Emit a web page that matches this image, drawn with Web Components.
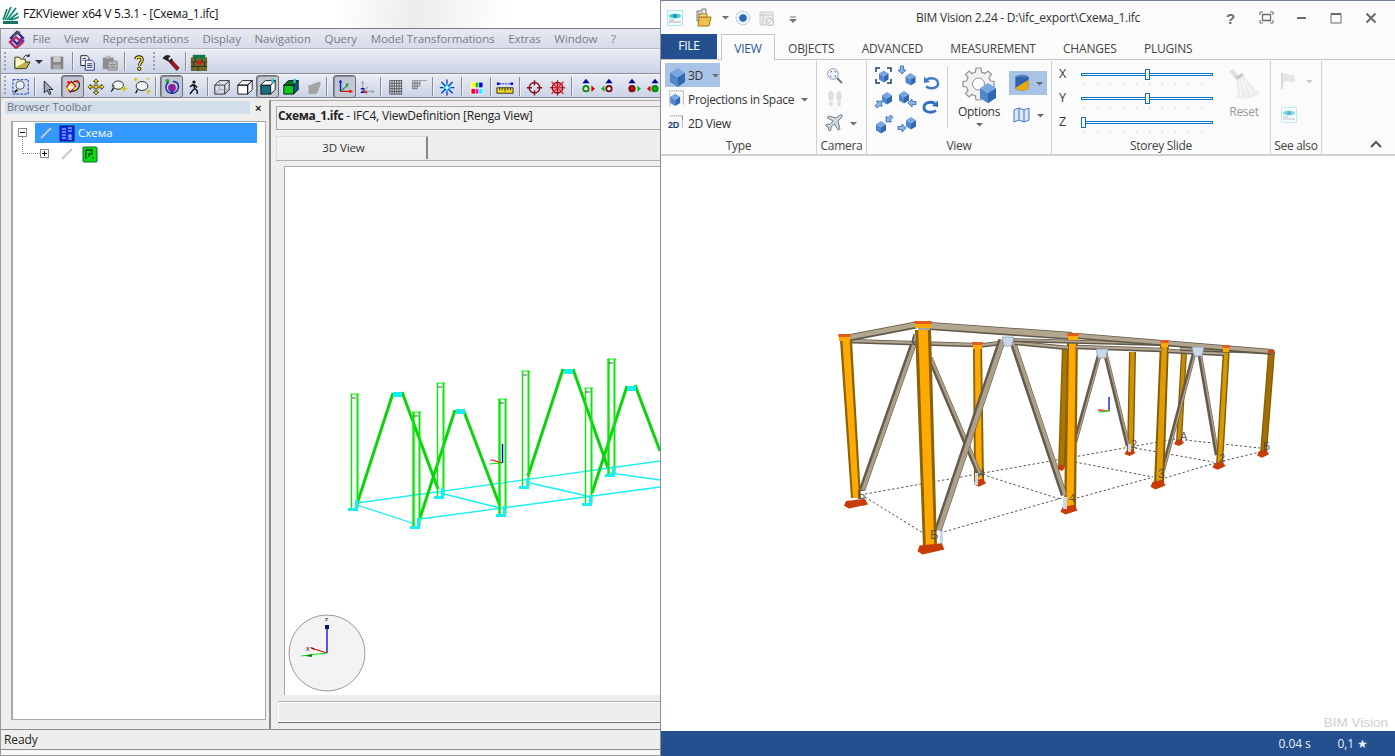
<!DOCTYPE html>
<html><head><meta charset="utf-8"><title>FZK and BIM Vision</title>
<style>html,body{margin:0;padding:0;background:#fff;width:1395px;height:756px;overflow:hidden}</style>
</head><body>
<desk-top></desk-top>
<script>
const cube=(x,y,s,t='#79a6de',l='#4f86cc',r='#2e68b3',k='none')=>{const h=s*.32;return `<path d="M${x} ${y+h}L${x+s*.5} ${y}L${x+s} ${y+h}L${x+s*.5} ${y+2*h}Z" fill="${t}" stroke="${k}" stroke-width=".8"/><path d="M${x} ${y+h}L${x+s*.5} ${y+2*h}V${y+2*h+s*.62}L${x} ${y+h+s*.62}Z" fill="${l}" stroke="${k}" stroke-width=".8"/><path d="M${x+s} ${y+h}L${x+s*.5} ${y+2*h}V${y+2*h+s*.62}L${x+s} ${y+h+s*.62}Z" fill="${r}" stroke="${k}" stroke-width=".8"/>`};
const arw=(x,y,rot)=>`<g transform="translate(${x} ${y}) rotate(${rot})"><path d="M-4 -1.6H0V-4L4 0L0 4V1.6H-4Z" fill="#8eb4e3" stroke="#3a71b8" stroke-width=".9"/></g>`;
const node=(circ,fill,side,col)=>`<path d="M10 1L14 6H6Z" fill="#00009c"/><circle cx="10" cy="12" r="3" fill="${fill}" stroke="${circ}" stroke-width="2"/>`+(side=='r'?`<path d="M16 8.5L20 12L16 15.5Z" fill="${col}"/>`:`<path d="M5 8.5L1 12L5 15.5Z" fill="${col}"/>`);
const grid=(c)=>{let s='';for(let i=0;i<6;i++){s+=`<path d="M${3+i*2.6} 3V18M3 ${3+i*3}H17" stroke="${c}" stroke-width=".9" fill="none"/>`}return s};
const ICONS={
 fzklogo:`<path d="M1 18H16V21H1Z" fill="#1a6f66"/><path d="M1 17L5 6M3 17L9 4M5 17L14 5M7 17L16 10M9 17L17 14" stroke="#0b8a74" stroke-width="1.7" fill="none"/>`,
 chain:`<path d="M9 2L15 8L9 14L3 8Z" fill="none" stroke="#2b2f8f" stroke-width="2.4"/><path d="M8 7L14 13L8 18L2 12Z" fill="none" stroke="#b02a6b" stroke-width="2.4"/><path d="M6 5L12 2" stroke="#555" stroke-width="2"/><path d="M12 8L16 12" stroke="#7b2fa0" stroke-width="2.4"/>`,
 folder:`<path d="M2 9V17H14L18 10H6Z" fill="#b9b050" stroke="#3c3a10"/><path d="M2 16V5H7L8 7H13V10" fill="#fff7c9" stroke="#3c3a10"/><path d="M11 6C12 3 15 2 17 4M17 4V1.5M17 4L14.6 4" stroke="#111" fill="none"/>`,
 down:`<path d="M6 8H14L10 12Z" fill="#333"/>`,
 save:`<path d="M3 3H17V17H3Z" fill="#878787"/><path d="M6 3H14V9H6Z" fill="#ccc"/><path d="M6 12H14V17H6Z" fill="#aaa"/>`,
 copy:`<path d="M2 2H9L11 4V13H2Z" fill="#fff" stroke="#111"/><path d="M7 7H14L17 10V18H7Z" fill="#fff" stroke="#0b1e78"/><path d="M4 5H8M4 7H6M9 11H15M9 13H15M9 15H15" stroke="#0b1e78"/>`,
 paste:`<path d="M2 4H14V17H2Z" fill="#8d8d8d"/><path d="M5 2H11V5H5Z" fill="#bbb"/><path d="M8 8H18V18H8Z" fill="#b8b8b8" stroke="#888"/><path d="M10 12H16M10 15H16" stroke="#777"/>`,
 help:`<path d="M6.5 6C7 2.500 13 2.500 13.500 6.200C13.800 9 10.800 9.500 10.400 13" fill="none" stroke="#111" stroke-width="3.600"/><path d="M6.500 6C7 2.500 13 2.500 13.500 6.200C13.800 9 10.800 9.500 10.400 13" fill="none" stroke="#f7e02d" stroke-width="1.800"/><circle cx="10.300" cy="16.500" r="1.900" fill="#f7e02d" stroke="#111"/>`,
 wrench:`<path d="M1 5C3 1.500 6 1 9 2.500L6.500 5.500L8 7.500L11 5.500C12 8 11.500 9.500 10.500 10.500" fill="#222" stroke="#111" stroke-width=".8"/><path d="M8 9L11 7L19 15.500L16.500 18.500Z" fill="#a31616" stroke="#3a0a0a" stroke-width=".8"/>`,
 brick:`<path d="M1 4H19V19H1Z" fill="#6b6a2a"/><path d="M1 9H19M1 14H19M6 4V9M13 4V9M4 9V14M16 9V14M9 14V19" stroke="#222" stroke-width=".8"/><path d="M8 8H13V12H8Z" fill="#e6131b"/><path d="M3 1H17V5H3Z" fill="#12784a"/>`,
 zoomwin:`<path d="M1 2H18V18H1Z" fill="none" stroke="#0a2cc0" stroke-dasharray="3 1.3"/><circle cx="9" cy="8" r="4.5" fill="#e9f2f7" stroke="#444"/><path d="M6 13L3 16" stroke="#111" stroke-width="2"/>`,
 pointer:`<path d="M5 2V16L8.5 13L11 18L13 17L10.5 12H15Z" fill="#aab" stroke="#111"/>`,
 select:`<path d="M3 10L8 4L13 9L7 16Z" fill="#fff" stroke="#c01" stroke-width="1.4"/><path d="M10 5C14 2 18 4 17 9C16 13 12 15 7 15" fill="none" stroke="#222" stroke-width="1.2"/><circle cx="5" cy="5" r="1.6" fill="#e21"/><circle cx="15" cy="4" r="1.6" fill="#e21"/><circle cx="4" cy="12" r="1.6" fill="#fc0"/><circle cx="12" cy="12" r="1.6" fill="#fc0"/><circle cx="9" cy="8" r="1.6" fill="#fc0"/>`,
 move:`<path d="M10 1L13 4H11V9H16V7L19 10L16 13V11H11V16H13L10 19L7 16H9V11H4V13L1 10L4 7V9H9V4H7Z" fill="#f8e21c" stroke="#222" stroke-width=".8"/>`,
 pan:`<ellipse cx="9" cy="8" rx="6" ry="4.6" fill="#eef3f6" stroke="#222"/><path d="M4 11C3 14 1 15 1 15" stroke="#111" stroke-width="1.5" fill="none"/><path d="M12 12H19M15.5 9V15" stroke="#d8c11a" stroke-width="2"/><path d="M2 9H5" stroke="#222"/>`,
 zoomrect:`<ellipse cx="10" cy="9" rx="6.5" ry="5" fill="#eef3f6" stroke="#222"/><path d="M5 13L3 17" stroke="#111" stroke-width="1.5"/><path d="M1 1H5M3 0V4M15 15H20M17 13V18M15 1H19" stroke="#d8c11a" stroke-width="1.5"/>`,
 orbit:`<circle cx="10" cy="11" r="4.3" fill="#8c1f9e"/><circle cx="5" cy="3.5" r="2.3" fill="#29a34a"/><path d="M6 5C1 9 3 17 10 17C15 17 18 13 17 8C16 5 13 4 11 4" fill="none" stroke="#0a2ca8" stroke-width="1.6"/><path d="M8 15L11 18V14Z" fill="#0a2ca8"/>`,
 walk:`<circle cx="10" cy="3" r="2" fill="#111"/><path d="M9 6L11 11L8 14L5 18M11 11L14 14V18M9 6L5 9M10 6L14 10" stroke="#111" stroke-width="1.8" fill="none"/>`,
 wirecube:`<path d="M2 8H13V18H2ZM2 8L7 3H18L13 8M18 3V13L13 18" fill="none" stroke="#222"/><path d="M7 3V13H18M7 13L2 18" stroke="#888" fill="none" stroke-width=".7"/>`,
 whitecube:`<path d="M2 8H13V18H2ZM2 8L7 3H18L13 8ZM18 3V13L13 18V8Z" fill="#fff" stroke="#111"/>`,
 tealcube:`<path d="M2 8H13V18H2Z" fill="#196f82" stroke="#111"/><path d="M2 8L7 3H18L13 8Z" fill="#fff" stroke="#111"/><path d="M18 3V13L13 18V8Z" fill="#fff" stroke="#111"/><path d="M15 1V6" stroke="#2cc" stroke-width="2.6"/>`,
 greencube:`<path d="M2 8H13V18H2Z" fill="#0ac81c" stroke="#111"/><path d="M2 8L7 3H18L13 8Z" fill="#07761a" stroke="#111"/><path d="M18 3V13L13 18V8Z" fill="#065a88" stroke="#111"/><path d="M14 1V6" stroke="#2cc" stroke-width="2.6"/>`,
 blob:`<path d="M3 9L11 6C15 3 19 4 17 8C15 13 15 16 12 18H4V11Z" fill="#a3a3a3"/>`,
 axis:`<path d="M5 15V3" stroke="#0a20c8" stroke-width="1.6"/><path d="M3 5L5 2L7 5Z" fill="#0a20c8"/><path d="M5 15H17" stroke="#e00" stroke-width="1.4"/><path d="M15 13L19 15L15 17Z" fill="#e00"/><path d="M5 15L13 8" stroke="#0a9c3c" stroke-width="1.4"/><path d="M10 7L14 6L13 10Z" fill="#0a9c3c"/>`,
 axisf:`<path d="M4 15V5M4 15L14 15M4 15L10 10" stroke="#9aa" stroke-width="1.4"/><path d="M2 6L4 3L6 6Z" fill="#9aa"/><path d="M14 13L18 15L14 17Z" fill="#9aa"/><path d="M2 12H6M2 16H6" stroke="#00a" stroke-width="1.6"/><path d="M5 14L9 17" stroke="#d00" stroke-width="1.6"/>`,
 grid:grid('#444'),
 gridf:`<path d="M3 3H19" stroke="#999"/>`+`<path d="M3 3V12M5.5 3V12M8 3V12M11 3V9M3 6H11M3 9H11M3 12H8" stroke="#666" stroke-width=".9"/>`,
 snow:`<path d="M10 0V20M1 10H19M3 3L17 17M17 3L3 17" stroke="#0a2cd0" stroke-width="1.6"/><path d="M5 10H15M10 5V15" stroke="#19d4ee" stroke-width="3"/><circle cx="10" cy="10" r="2" fill="#fff"/>`,
 colors:`<path d="M1 1H19V19H1Z" fill="#fff"/><path d="M2 2H7V9H2Z" fill="#ff0"/><path d="M8 2H12V9H8Z" fill="#0c0"/><path d="M13 2H18V9H13Z" fill="#00e"/><path d="M2 11H7V18H2Z" fill="#f01"/><path d="M8 11H12V18H8Z" fill="#f0d"/><path d="M13 11H18V18H13Z" fill="#0ff"/>`,
 ruler:`<path d="M1 5H4V8H1ZM16 5H19V8H16Z" fill="#0000d0"/><path d="M4 6.5H16" stroke="#0000d0" stroke-dasharray="2 1.2"/><path d="M1 11H19V17H1Z" fill="#f8e21c" stroke="#222"/><path d="M4 11V14M7 11V14M10 11V15M13 11V14M16 11V14" stroke="#222"/>`,
 target:`<circle cx="10" cy="10" r="6.2" fill="none" stroke="#8a0e16" stroke-width="1.6"/><path d="M10 1V7M10 13V19M1 10H7M13 10H19" stroke="#8a0e16" stroke-width="1.6"/>`,
 targetx:`<circle cx="10" cy="10" r="6.2" fill="none" stroke="#8a0e16" stroke-width="1.6"/><path d="M10 1V19M1 10H19" stroke="#8a0e16" stroke-width="1.4"/><path d="M3 3L17 17M17 3L3 17" stroke="#f01e2a" stroke-width="1.5"/><path d="M6 6H14V14H6Z" fill="none" stroke="#f01e2a" stroke-dasharray="1.5 1"/>`,
 n1:node('#0a8c0a','#fff','r','#d00000'),n2:node('#7a0c12','#fff','l','#0bb80b'),n3:node('#7a0c12','#d40c12','r','#0bb80b'),n4:node('#0a8c0a','#0bb80b','l','#e00000'),
 slash:`<path d="M3 13L13 3" stroke="#c6c6c6" stroke-width="2"/>`,
 blueleaf:`<path d="M1 1H15V16H1Z" fill="#0a2cf0" stroke="#001a70"/><path d="M3 4H7M3 7H7M3 10H7M3 13H7" stroke="#cde" stroke-width="1.2"/><path d="M9 3H13M9 6H13M11 9V13M9 11H13M9 14H13" stroke="#cde" stroke-width="1.1"/>`,
 greenleaf:`<path d="M1 1.5Q1 1 2 1H14Q15 1 15 2V15Q15 16 14 16H2Q1 16 1 15Z" fill="#0cdc10" stroke="#063"/><path d="M4 13V4H10V8H7V11" fill="none" stroke="#041" stroke-width="1.3"/><path d="M11 11V13" stroke="#041" stroke-width="1.3"/>`,
 bimlogo:`<path d="M1.5 2Q1.500 1.500 2 1.500H16Q16.500 1.500 16.500 2V16Q16.500 16.500 16 16.500H2Q1.500 16.500 1.500 16Z" fill="#f6fdfd" stroke="#a9e6ea"/><ellipse cx="9" cy="7" rx="6" ry="2.500" fill="#3fcfd9"/><ellipse cx="9" cy="7" rx="2" ry="1.800" fill="#2c86a8"/><path d="M3 11H8M3 13H15" stroke="#aab" stroke-width="1.100"/>`,
 bimfolder:`<path d="M2 3H6L7 1H11V13H2Z" fill="#eee" stroke="#777"/><path d="M4 3V13M7 3V13" stroke="#999"/><path d="M4 9H16L14 18H3Z" fill="#eec04e" stroke="#a37a1b"/><path d="M4 6H12V9H4Z" fill="#f7d782" stroke="#a37a1b"/>`,
 tri:`<path d="M1 3H8L4.5 6.5Z" fill="#6b6b6b"/>`,
 trig:`<path d="M1 3H8L4.5 6.5Z" fill="#ccc"/>`,
 record:`<circle cx="8" cy="8" r="6.8" fill="#f2f6fc" stroke="#9dbbe0" stroke-dasharray="2.4 1"/><circle cx="8" cy="8" r="3.8" fill="#2b6cb8"/>`,
 gray:`<path d="M1 2H14V15H1Z" fill="#ececec" stroke="#cfcfcf"/><path d="M1 5H14M4 2V15" stroke="#c8c8c8"/><circle cx="11" cy="12" r="3.6" fill="#f5f5f5" stroke="#bbb"/><path d="M8.8 14L13 10" stroke="#bbb"/>`,
 qatmore:`<path d="M2 4H8" stroke="#777"/><path d="M1 6H9L5 10Z" fill="#777"/>`,
 help2:`<text x="2" y="14" font-family="Liberation Sans" font-weight="700" font-size="15" fill="#6b6b6b">?</text>`,
 restore:`<path d="M1 4V1H4M11 1H14V4M1 9V12H4M11 12H14V9" fill="none" stroke="#6b6b6b"/><path d="M3.500 3.500H11.500V9.500H3.500Z" fill="none" stroke="#6b6b6b" stroke-width="1.300"/>`,
 min:`<path d="M1 6H10" stroke="#6b6b6b" stroke-width="2"/>`,
 max:`<path d="M1 1.5H11V11H1Z" fill="none" stroke="#6b6b6b"/><path d="M1 2H11" stroke="#6b6b6b" stroke-width="2"/>`,
 close:`<path d="M1.5 1.5L10.5 10.5M10.5 1.5L1.5 10.5" stroke="#6b6b6b" stroke-width="2"/>`,
 cube3d:cube(1,1,15),
 proj:`<path d="M1 1H17V17" fill="none" stroke="#666" stroke-dasharray="1 1"/><path d="M2 3V18" stroke="#666" stroke-dasharray="1 1"/>`+cube(2.5,4,11),
 view2d:`<path d="M3 2H16V7M16 2V16" fill="none" stroke="#666" stroke-dasharray="1 1"/><text x="0" y="16" font-family="Liberation Sans" font-weight="700" font-size="10" fill="#143f78">2D</text>`,
 mag:`<circle cx="7" cy="7" r="5.3" fill="#f1f6fb" stroke="#99a"/><path d="M5 5.5V4.5H6M8.500 4.500H9.500V5.500M9.500 8.500V9.500H8.500M5.500 9.500H4.500V8.500" stroke="#3f78c4" fill="none"/><path d="M11 11L16 16" stroke="#777" stroke-width="2"/>`,
 feet:`<ellipse cx="5" cy="6" rx="2.7" ry="5" fill="#dedede"/><ellipse cx="5" cy="14" rx="2" ry="2.4" fill="#dedede"/><ellipse cx="13" cy="6" rx="2.7" ry="5" fill="#dedede"/><ellipse cx="13" cy="14" rx="2" ry="2.4" fill="#dedede"/>`,
 plane:`<path d="M15 1C16 0 18 1 17 3L13 7L15 15L13 16L9.500 10L6 13V16L4 17L3 13L0.500 11.500L2 10L5 10.500L8 7L2 3.500L4 2L11 4Z" fill="#cfd8de" stroke="#65747d" stroke-width=".9"/>`,
 vfront:`<path d="M1 5V1H5M12 1H16V5M1 12V16H5M12 16H16V12" fill="none" stroke="#1d3f6e" stroke-width="1.5"/>`+cube(4,3.500,9.5),
 vtop:arw(4,4,90)+cube(7.500,7,10),
 vleft:arw(4,14,-45)+cube(7,2,10),
 vright:cube(1,1,10)+arw(14,13,180),
 vfl:cube(1,7,10)+arw(14,5,135),
 vbr:arw(4,14,0)+cube(8,3,10),
 rotl:`<path d="M5 5.500C9 3 16 4.500 16 9.500C16 14.500 8 15.500 4 12.500" fill="none" stroke="#3f7cc8" stroke-width="2.4"/><path d="M2 2.500V9L8 8Z" fill="#3f7cc8"/>`,
 rotr:`<path d="M13 5.500C9 3 2 4.500 2 9.500C2 14.500 10 15.500 14 12.500" fill="none" stroke="#2f6fc0" stroke-width="2.800"/><path d="M16 2.500V9L10 8Z" fill="#2f6fc0"/>`,
 gear:`<path d="M15 1H20L20.500 5L24 6.500L27 4L30.500 7.500L28 10.500L29.500 14L33 14.500V19.500L29.500 20L28 23.500L30.500 26.500L27 30L24 27.500L20.500 29L20 33H15L14.500 29L11 27.500L8 30L4.500 26.500L7 23.500L5.500 20L2 19.500V14.500L5.500 14L7 10.500L4.500 7.500L8 4L11 6.500L14.500 5Z" fill="#f1f1f1" stroke="#8d9199" stroke-width="1.2"/><circle cx="17.500" cy="17" r="6" fill="#fff" stroke="#8d9199"/>`+cube(19,16,16),
 cyl:`<ellipse cx="12" cy="5" rx="8" ry="3" fill="#4d7fc2"/><path d="M4 5V18C4 22 20 22 20 18V5Z" fill="#2f62a8"/><path d="M4 18C4 22 20 22 20 18V8Z" fill="#e9a90e"/>`,
 map:`<path d="M1 3L6 1L11 3L16 1V13L11 15L6 13L1 15Z" fill="#dbe8f8" stroke="#3f78c4"/><path d="M6 1V13M11 3V15" stroke="#3f78c4"/>`,
 broom:`<path d="M3 2L11 12" stroke="#dedede" stroke-width="4"/><path d="M8 10L14 6" stroke="#c4c4c4" stroke-width="3"/><path d="M8.500 11L14.500 7C18 14 25 18 29 24C22 30 13 29 8 27C10 22 8 16 8.500 11Z" fill="#ececec"/><path d="M10.500 13L12.500 27M13 11L18 27M15 11L23 25" stroke="#fafafa" stroke-width="1.200"/>`,
 flag:`<path d="M3 2V18" stroke="#d8d8d8" stroke-width="2"/><path d="M4 3C8 1 11 6 15 3C15 7 16 9 16 10C12 13 9 8 4 11Z" fill="#e5e5e5"/>`,
 chev:`<path d="M1 7L6 2L11 7" fill="none" stroke="#555" stroke-width="2"/>`
};
class XIcon extends HTMLElement{connectedCallback(){const n=this.getAttribute('name'),w=+this.getAttribute('w')||20,h=+this.getAttribute('h')||w,vw=+this.getAttribute('vw')||w,vh=+this.getAttribute('vh')||h;const r=this.shadowRoot||this.attachShadow({mode:'open'});r.innerHTML=`<style>:host{display:inline-flex;width:${w}px;height:${h}px;flex:none}svg{display:block;overflow:visible}</style><svg width="${w}" height="${h}" viewBox="0 0 ${vw} ${vh}" xmlns="http://www.w3.org/2000/svg">${ICONS[n]||''}</svg>`}}
customElements.define('x-icon',XIcon);

class TbBtn extends HTMLElement{connectedCallback(){const p=this.hasAttribute('pressed'),w=this.getAttribute('w')||23;const r=this.attachShadow({mode:'open'});r.innerHTML=`<style>:host{display:flex;flex:none;width:${w}px;height:23px;align-items:center;justify-content:center;box-sizing:border-box;${p?'background:#c3c7d2;border:1px solid #6e7078;border-radius:3px;box-shadow:inset 1px 1px 0 #888c96;':''}}</style><x-icon name="${this.getAttribute('icon')}" w="${this.getAttribute('s')||18}" vw="20"></x-icon>`}}
customElements.define('tb-btn',TbBtn);
class TbSep extends HTMLElement{connectedCallback(){const r=this.attachShadow({mode:'open'});r.innerHTML=`<style>:host{display:block;flex:none;width:1px;height:19px;background:#8a8d96;box-shadow:1px 0 0 #eef0f6;margin:0 ${this.getAttribute('m')||3}px}</style>`}}
customElements.define('tb-sep',TbSep);
class TbGrip extends HTMLElement{connectedCallback(){const r=this.attachShadow({mode:'open'});r.innerHTML=`<style>:host{display:block;flex:none;width:2px;height:20px;margin:0 2px 0 3px;background:repeating-linear-gradient(#9aa0ad 0 2px,transparent 2px 4px)}</style>`}}
customElements.define('tb-grip',TbGrip);
class FzkBar extends HTMLElement{constructor(){super();const r=this.attachShadow({mode:'open'});r.innerHTML=`<style>:host{display:flex;align-items:center;box-sizing:border-box;height:24px;background:linear-gradient(#e9ecf4,#cbd3e7);border-bottom:1px solid #8b8f99;border-top:1px solid #f4f5f8;font-size:0}</style><slot></slot>`}}
customElements.define('fzk-bar',FzkBar);

class FzkWindow extends HTMLElement{constructor(){super();const r=this.attachShadow({mode:'open'});r.innerHTML=`<style>
:host{display:flex;flex-direction:column;width:670px;height:756px;font-family:"Open Sans","Noto Sans",sans-serif;font-size:11.500px;background:#fff;overflow:hidden}
.title{height:28px;display:flex;align-items:center;gap:4px;padding-left:2px;flex:none;background:linear-gradient(100deg,#fff 50%,#ececec 62%,#f5f5f5 68%,#fff 76%);color:#111}
.title span{font-size:12px;letter-spacing:-.23px;padding-bottom:1px}
.frame{flex:1;display:flex;flex-direction:column;border-top:1px solid #7e7e7e;border-left:1px solid #9a9a9a;min-height:0;background:#efefef}
.menu{height:20px;box-sizing:border-box;flex:none;display:flex;align-items:center;background:linear-gradient(#e8eaf2,#d6dbe9);color:#7a7c84;font-size:11.500px;gap:13.600px;border-bottom:1px solid #b6b9c1;letter-spacing:-.08px}
.menu x-icon{margin:0 -7px 0 7px}
.main{flex:1;display:flex;min-height:0;padding:0;background:#eeeeee}
.left{width:268px;flex:none;display:flex;flex-direction:column;box-sizing:border-box;padding:3px 5px 9px 4px}
.lh{display:flex;align-items:center;height:13px;flex:none;gap:0;color:#6f7378;font-size:11px;margin-bottom:7px}
.lh span{flex:1;background:#d2dfeb;height:13px;line-height:12px;padding-left:2px;margin-right:5px}
.lh b{font:700 11px "Liberation Sans";color:#222;width:9px}
.tree{flex:1;background:#fff;border:1px solid #a9a9a9;border-left-width:2px;margin-left:6px;margin-right:-2px;padding:0;position:relative}
.row{display:flex;align-items:center;height:21px}
.sel{background:#3399ff;color:#fff;height:20px;width:222px;margin-left:22px;display:flex;align-items:center;gap:5px;font-size:11.500px;padding-left:3px;box-sizing:border-box}
.box{width:9px;height:9px;box-sizing:border-box;border:1px solid #888;background:#fff;position:relative;flex:none}
.box:before{content:"";position:absolute;left:1px;right:1px;top:3px;height:1px;background:#111}
.box.p:after{content:"";position:absolute;top:1px;bottom:1px;left:3px;width:1px;background:#111}
.conn{position:absolute;left:9px;top:14px;width:18px;height:18px;border-left:1px dotted #888;border-bottom:1px dotted #888;box-sizing:border-box}
.right{flex:1;min-width:0;box-sizing:border-box;border-left:2px solid #8c8c8c;border-top:1px solid #aaa;margin-top:2px;padding:5px 0 6px 5px;display:flex;flex-direction:column}
.hd{height:24px;flex:none;box-sizing:border-box;border:1px solid #a9a9a9;border-right:0;background:#f1f1f1;font-size:12px;color:#222;line-height:18px;padding-left:1px;letter-spacing:-.2px;white-space:nowrap;overflow:hidden}
.hd b{font-weight:700;letter-spacing:-.3px}
.tabs{height:24px;margin-top:6px;flex:none;border-bottom:1px solid #b0b0b0;background:#eee}
.tab{width:152px;height:23px;box-sizing:border-box;background:#f1f1f1;border:1px solid #ddd;border-right:2px solid #888;border-bottom:0;text-align:center;padding-right:16px;font-size:11.500px;line-height:21px;color:#333;letter-spacing:-.1px}
.vw{flex:1;min-height:0;margin:5px 0 0 8px;box-sizing:border-box;border-left:1.500px solid #aaa;border-top:1.500px solid #aaa;background:#fff;position:relative}
.bot{height:22px;flex:none;margin:6px 0 0 2px;border-top:1px solid #aaa;border-bottom:1.500px solid #6e6e6e;background:#eeecec;box-sizing:border-box;box-shadow:inset 1px 1px 0 #fff,inset 0 -1px 0 #fff}
.st{height:26px;flex:none;background:#fff;border-top:1px solid #8e8e8e}
.st div{height:19px;background:#eee;border-bottom:1px solid #8e8e8e;font-size:12px;line-height:19px;padding-left:3px;color:#222;letter-spacing:-.1px}
.st:after{content:"";display:block;height:5px;border-bottom:1px solid #9a9a9a;background:#f7f7f7}
</style>
<div class="title"><x-icon name="fzklogo" w="17" h="22" vw="17" vh="22"></x-icon><span>FZKViewer x64 V 5.3.1 - [Схема_1.ifc]</span></div>
<div class="frame">
<div class="menu"><x-icon name="chain" w="18"></x-icon><span>File</span><span>View</span><span>Representations</span><span>Display</span><span>Navigation</span><span>Query</span><span>Model Transformations</span><span>Extras</span><span>Window</span><span>?</span></div>
<fzk-bar style="height:25px"><tb-grip></tb-grip><span style="display:inline-block;width:3px"></span><tb-btn icon="folder" w="22" s="19"></tb-btn><tb-btn icon="down" w="12" s="20"></tb-btn><tb-btn icon="save"></tb-btn><tb-sep m="4"></tb-sep><tb-btn icon="copy" w="22"></tb-btn><tb-btn icon="paste" w="22"></tb-btn><tb-sep m="3"></tb-sep><tb-btn icon="help" w="22"></tb-btn><tb-grip></tb-grip><span style="display:inline-block;width:2px"></span><tb-btn icon="wrench"></tb-btn><tb-sep m="3"></tb-sep><tb-btn icon="brick" w="20"></tb-btn></fzk-bar>
<fzk-bar><tb-grip></tb-grip><span style="display:inline-block;width:1px"></span><tb-btn icon="zoomwin"></tb-btn><tb-sep m="2"></tb-sep><tb-btn icon="pointer" w="22" s="17"></tb-btn><tb-btn icon="select" pressed style="margin-left:2px"></tb-btn><tb-btn icon="move"></tb-btn><tb-btn icon="pan"></tb-btn><tb-btn icon="zoomrect"></tb-btn><tb-sep m="2"></tb-sep><tb-btn icon="orbit" pressed style="margin-left:2px"></tb-btn><tb-btn icon="walk" w="22" s="16"></tb-btn><tb-sep m="2"></tb-sep><tb-btn icon="wirecube"></tb-btn><tb-btn icon="whitecube"></tb-btn><tb-btn icon="tealcube" pressed></tb-btn><tb-btn icon="greencube"></tb-btn><tb-btn icon="blob"></tb-btn><tb-sep m="1"></tb-sep><tb-btn icon="axis" pressed style="margin-left:5px"></tb-btn><tb-btn icon="axisf"></tb-btn><tb-sep m="1"></tb-sep><tb-btn icon="grid" style="margin-left:2px"></tb-btn><tb-btn icon="gridf"></tb-btn><tb-sep m="2"></tb-sep><tb-btn icon="snow" s="16"></tb-btn><tb-sep m="3"></tb-sep><tb-btn icon="colors" s="14"></tb-btn><tb-sep m="2"></tb-sep><tb-btn icon="ruler"></tb-btn><tb-sep m="3"></tb-sep><tb-btn icon="target" s="17"></tb-btn><tb-btn icon="targetx" s="17"></tb-btn><tb-sep m="2"></tb-sep><tb-btn icon="n1"></tb-btn><tb-btn icon="n2"></tb-btn><tb-btn icon="n3"></tb-btn><tb-btn icon="n4"></tb-btn></fzk-bar>
<div class="main">
<div class="left"><div class="lh"><span>Browser Toolbar</span><b>×</b></div>
<div class="tree"><div class="conn"></div>
<div class="row"><span class="box" style="margin-left:5px;position:absolute"></span><div class="sel"><x-icon name="slash" w="16"></x-icon><x-icon name="blueleaf" w="16" vw="16"></x-icon><span style="margin-left:-2px">Схема</span></div></div>
<div class="row" style="gap:10px"><span class="box p" style="margin-left:27px"></span><x-icon name="slash" w="16"></x-icon><x-icon name="greenleaf" w="16" vw="16" style="margin-left:-3px"></x-icon></div>
</div></div>
<div class="right"><div class="hd"><b>Схема_1.ifc</b> - IFC4, ViewDefinition [Renga View]</div>
<div class="tabs"><div class="tab">3D View</div></div>
<div class="vw"><fzk-model></fzk-model></div>
<div class="bot"></div></div>
</div>
<div class="st"><div>Ready</div></div>
</div>`}}
customElements.define('fzk-window',FzkWindow);

class FzkModel extends HTMLElement{constructor(){super();const r=this.attachShadow({mode:'open'});
 const L=(a,b,c,d,col,w)=>`<path d="M${a} ${b}L${c} ${d}" stroke="${col}" stroke-width="${w}" fill="none"/>`;
 let s='';
 [[357,502,660,460],[357,504,415,523],[420,518,660,486],[440,492,500,507],[530,482,587,495],[610,472,660,479]].forEach(a=>s+=L(...a,'#19eef2',1.300));
 [[357,503,393,392],[402,391,438,488],[420,517,455,409],[463,408,500,505],[528,475,563,368],[573,368,608,467],[592,492,627,385],[635,384,660,450]].forEach(a=>s+=L(...a,'#0cd40c',3));
 [[351,393,507],[413,411,525],[437,382,495],[499,398,513],[522,370,485],[585,387,502],[608,358,473]].forEach(([x,y1,y2])=>{const thick=(x==413||x==499||x==608)?2.400:1.400;s+=L(x+.5,y1,x+.5,y2,'#0ce80c',thick)+L(x+6.5,y1,x+6.5,y2,'#0ce80c',2)+L(x-.5,y1,x+8,y1,'#0ce80c',1)+`<path d="M${x-3} ${y2}h10v3h-10Z" fill="#19eef2"/><path d="M${x+4} ${y2-8}h3v8h-3Z" fill="#19eef2"/><path d="M${x+1} ${y1+4}h4" stroke="#111" stroke-width=".7"/>`});
 [[397,393],[460,410],[568,370],[631,387]].forEach(([x,y])=>s+=`<rect x="${x-4}" y="${y-2}" width="9" height="5" fill="#19eef2"/>`);
 s+=L(502.500,443,502.500,462,'#0000c8',1.500)+L(492,459,502,462,'#e00',1.200)+L(489,463,502,462,'#0ce80c',1.200)+`<text x="490" y="460" font-size="4" fill="#a00" font-family="Liberation Sans">x</text>`;
 s+=`<circle cx="327" cy="652" r="38" fill="#f3f3f3" stroke="#9a9a9a" stroke-width="1"/>`+L(327,628,327,652,'#0000e6',1.300)+L(311,647,327,652,'#e00',1.200)+L(301,655,327,652,'#0ce80c',1.200)+`<path d="M325 624h4v4h-4Z" fill="#001a70"/><path d="M305 655l7 -2v3Z" fill="#0a7a0a"/><path d="M310 646l4 1v2Z" fill="#701010"/><text x="306" y="650" font-size="7" fill="#400" font-family="Liberation Sans">x</text><text x="325" y="620" font-size="6" fill="#003" font-family="Liberation Sans">z</text>`;
 r.innerHTML=`<style>:host{display:block;position:absolute;left:0;top:0;right:0;bottom:0;overflow:hidden}svg{display:block;position:absolute;left:0;top:0}</style><svg width="376" height="527" viewBox="285 166 376 527" xmlns="http://www.w3.org/2000/svg">${s}</svg>`}}
customElements.define('fzk-model',FzkModel);

class RibGroup extends HTMLElement{constructor(){super();const r=this.attachShadow({mode:'open'});r.innerHTML=`<style>:host{display:flex;flex-direction:column;flex:none;box-sizing:border-box;border-right:1px solid #d0d0d0;height:93px;margin-top:1px;position:relative}.c{flex:1;display:flex;min-height:0}.l{height:16px;line-height:16px;text-align:center;font-size:12px;color:#444;letter-spacing:-.3px;white-space:nowrap}</style><div class="c"><slot></slot></div><div class="l"></div>`}
connectedCallback(){this.shadowRoot.querySelector('.l').textContent=this.getAttribute('label');this.style.width=this.getAttribute('w')+'px'}}
customElements.define('rib-group',RibGroup);

class RibSlider extends HTMLElement{connectedCallback(){const r=this.attachShadow({mode:'open'}),v=+this.getAttribute('at');r.innerHTML=`<style>:host{display:flex;align-items:flex-start;height:24px;gap:0;font-size:12px;color:#333}
.n{width:29px;text-align:left;padding-left:7px;box-sizing:border-box;height:24px;line-height:14px;font-size:12.500px}
.t{position:relative;width:132px;height:24px}
.b{position:absolute;left:0;right:0;top:6px;height:3px;box-sizing:border-box;border:1px solid #0a72c4;background:#fff}
.k{position:absolute;top:2px;left:${v}px;width:5px;height:11px;box-sizing:border-box;border:1px solid #0a72c4;background:#fff}
.d{position:absolute;left:3px;right:3px;top:16px;height:1px;background:repeating-linear-gradient(90deg,#bbb 0 1px,transparent 1px 13px)}</style>
<div class="n">${this.getAttribute('n')}</div><div class="t"><div class="b"></div><div class="d"></div><div class="k"></div></div>`}}
customElements.define('rib-slider',RibSlider);

class BimModel extends HTMLElement{constructor(){super();const r=this.attachShadow({mode:'open'});
 const D=(pts)=>`<path d="M${pts}" stroke="#555" stroke-width="1" stroke-dasharray="2.400 2.200" fill="none"/>`;
 const col=(a,b,yt,c,d,yb,main='#ffaa00',edge='#8d6200')=>{const f=.2;const al=a+(b-a)*f,bl=b-(b-a)*f,cl=c+(d-c)*f,dl=d-(d-c)*f;return `<path d="M${a} ${yt}L${b} ${yt}L${d} ${yb}L${c} ${yb}Z" fill="${edge}"/><path d="M${al} ${yt}L${bl} ${yt}L${dl} ${yb}L${cl} ${yb}Z" fill="${main}"/>`};
 const beam=(a,b,c,d,w=5)=>`<path d="M${a} ${b}L${c} ${d}" stroke="#5f584b" stroke-width="${w}"/><path d="M${a} ${b-.4}L${c} ${d-.4}" stroke="#b3a68f" stroke-width="${w-2.400}"/>`;
 const brace=(a,b,c,d,w=5)=>`<path d="M${a} ${b}L${c} ${d}" stroke="#625b4e" stroke-width="${w}"/><path d="M${a+1} ${b}L${c+1} ${d}" stroke="#ad9f88" stroke-width="${w-3}"/>`;
 const base=(x,y,w,h)=>`<path d="M${x-w/2+2} ${y-h*.3}L${x+w/2-3} ${y-h*.6}L${x+w/2} ${y+h*.2}L${x-w/2+5} ${y+h*.8}L${x-w/2} ${y+h*.4}Z" fill="#c83c06"/>`;
 const cap=(a,b,y)=>`<path d="M${a-1} ${y}L${b+1} ${y}L${b} ${y+4}L${a} ${y+4}Z" fill="#e25d1b"/><path d="M${a} ${y+3}L${b} ${y+3}L${b} ${y+7}L${a} ${y+7}Z" fill="#ffaa00"/>`;
 const gus=(x,y)=>`<path d="M${x-6} ${y}H${x+6}L${x+4} ${y+9}H${x-4}Z" fill="#c9d8ea" stroke="#8b96a4" stroke-width=".7"/>`;
 const tag=(t,x,y,fs=12)=>`<text x="${x}" y="${y}" font-family="Liberation Sans" font-size="${fs}" fill="#444" fill-opacity=".85">${t}</text>`;
 let s='';
 s+=D('865 494L1175 439')+D('865 497L923 533')+D('940 533L1062 498')+D('1077 498L1150 478')+D('1165 478L1215 463')+D('1223 461L1260 452')+D('987 476L1060 499')+D('1075 462L1153 477')+D('1135 448L1213 462')+D('1185 440L1260 448');
 s+=col(1268,1275,352,1260,1267,453,'#a26f06','#8a5e04')+base(1263,453,12,6);
 s+=col(1181,1187,352,1176,1182,442,'#c48a08','#845b03')+base(1179,442,10,5);
 s+=col(1129,1136,352,1127,1134,452,'#d39505','#845b03')+base(1130,452,11,5);
 s+=col(1062,1069,346,1058,1065,467,'#aa7604','#8d6200')+base(1061,467,8,5);
 s+=brace(1100,352,1075,442,4.500)+brace(1105,352,1128,446,4.500)+brace(1199,350,1217,455,4.500);
 s+=col(1223,1230,347,1216,1223,465,'#d69805','#845b03')+base(1219,465,13,6);
 s+=brace(1195,350,1163,470,4.500);
 s+=col(1160,1169,342,1154,1164,484,'#e09c03','#845b03')+base(1158,484,15,7);
 s+=col(973,982,343,974,984,482)+base(980,482,12,6);
 s+=brace(930,358,980,476,5.500);
 s+=col(1067,1078,335,1064,1076,510)+base(1069,509,17,7);
 s+=brace(1012,340,1064,495,6.500);
 s+=`<path d="M1063 497h4v12h-4Z" fill="#c9d8ea"/><path d="M975 473h3v12h-3Z" fill="#c9d8ea"/><path d="M862 497h3v9h-3Z" fill="#c9d8ea"/><path d="M1128 444h3v8h-3Z" fill="#c9d8ea"/><path d="M940 530h3v18h-3Z" fill="#c9d8ea"/>`;
 s+=beam(845,341,973,345,4.500)+beam(977,346,1001,343,4.500)+beam(1015,343,1068,348,4.500)+beam(1076,347,1161,350,4.500)+beam(1168,351,1224,354,4.500)+beam(1005,340,1160,344,4)+beam(1180,349,1268,352,4);
 s+=beam(843,339,916,325,7)+beam(930,326,1072,336,8)+beam(1077,336,1273,352,6);
 s+=brace(862,490,913,345,6.500);
 s+=col(840,852,340,851,861,498)+base(856,503,24,7)+cap(839,850,334);
 s+=brace(938,530,1002,340,7.500);
 s+=col(915,931,330,923,937,547)+base(931,548,27,8)+cap(915,931,321);
 s+=cap(973,982,342)+cap(1068,1078,333)+cap(1161,1168,340)+cap(1223,1229,345);
 s+=`<path d="M1268 350h7l-1 3h-6Z" fill="#c94a10"/>`;
 s+=gus(1008,337)+gus(1102,349)+gus(1198,347);
 s+=`<path d="M912 342l2 -8v10ZM918 329h12" stroke="#4e5158" stroke-width="1.200" fill="none"/>`;
 s+=tag('Б',857,499,13)+tag('Б',930,539,13)+tag('4',979,477,11)+tag('4',1069,502,11)+tag('2',1131,448,11)+tag('3',1158,478,12)+tag('А',1180,440,11)+tag('2',1219,462,11)+tag('Б',1263,450,11);
 s+=`<path d="M1109 397V411" stroke="#1a30e0" stroke-width="1.500"/><path d="M1098 410L1109 411" stroke="#f33" stroke-width="1.300"/><path d="M1099 412L1109 411" stroke="#3d3" stroke-width="1.300"/>`;
 r.innerHTML=`<style>:host{display:block;position:absolute;inset:0}svg{position:absolute;left:0;top:0;display:block}</style><svg width="734" height="575" viewBox="661 156 734 575" xmlns="http://www.w3.org/2000/svg">${s}</svg>`}}
customElements.define('bim-model',BimModel);

class BimWindow extends HTMLElement{constructor(){super();const r=this.attachShadow({mode:'open'});r.innerHTML=`<style>
:host{display:flex;flex-direction:column;width:735px;height:756px;box-sizing:border-box;border-left:1px solid #8a9099;border-top:1px solid #6f7f94;font-family:"Open Sans","Noto Sans",sans-serif;font-size:12px;color:#444;background:#fff}
.t{height:33px;flex:none;display:flex;align-items:center;background:#fbfbfb;position:relative;padding-left:5px}
.t .q{display:flex;align-items:center}
.ttl{position:absolute;left:0;right:0;top:8px;text-align:center;font-size:12px;color:#333;letter-spacing:-.26px}
.w{margin-left:auto;display:flex;align-items:center;gap:20px;padding-right:18px}
.tabs{height:26px;flex:none;display:flex;background:#fbfbfb;border-bottom:1px solid #c6c6c6;box-sizing:border-box;position:relative;color:#444;font-size:12px;letter-spacing:-.2px}
.file{width:56px;height:25px;background:#24508f;color:#fff;text-align:center;line-height:23px;font-size:12px}
.vt{width:54px;height:26px;box-sizing:border-box;margin-left:4px;border:1px solid #c6c6c6;border-bottom:0;background:#fbfbfb;color:#2b5797;text-align:center;line-height:27px}
.tb{line-height:29px;margin-left:27.300px}
.rib{height:96px;flex:none;display:flex;background:#fbfbfb;border-bottom:2px solid #d2d2d2;box-sizing:border-box;position:relative;color:#333}
.col{display:flex;flex-direction:column}
.item{height:24px;display:flex;align-items:center;gap:4px;box-sizing:border-box;white-space:nowrap;letter-spacing:-.3px}
.hl{background:#a9c3e6}
.big{display:flex;flex-direction:column;align-items:center}
.g3{display:grid;grid-template-columns:23px 24px 24px;grid-auto-rows:24px;margin:2px 0 0 5px;align-items:center;justify-items:center}
.vsep{width:1px;height:61px;background:#d0d0d0;margin:6px 0 0 4px}
.chev{position:absolute;right:13px;bottom:1px}
.cv{flex:1;position:relative;min-height:0;background:#fff}
.wm{position:absolute;right:7px;bottom:1px;font:13.500px "Liberation Sans",sans-serif;color:#cfcfcf}
.st{height:25px;flex:none;background:#24508f;color:#e8eef7;display:flex;align-items:center;justify-content:flex-end;padding-right:27px;gap:27px;font-size:12px;letter-spacing:-.1px}
</style>
<div class="t"><div class="q"><x-icon name="bimlogo" w="18"></x-icon><x-icon name="bimfolder" w="19" vw="19" style="margin-left:11px"></x-icon><x-icon name="tri" w="9" h="9" style="margin-left:6.500px"></x-icon><x-icon name="record" w="16" style="margin-left:5.500px"></x-icon><x-icon name="gray" w="16" style="margin-left:8px"></x-icon><x-icon name="qatmore" w="10" style="margin-left:13px"></x-icon></div>
<div class="ttl">BIM Vision 2.24 - D:\\ifc_export\\Схема_1.ifc</div>
<div class="w"><x-icon name="help2" w="12" h="16"></x-icon><x-icon name="restore" w="15" h="13" style="margin-left:2.500px"></x-icon><x-icon name="min" w="11" h="11" style="margin-left:2px"></x-icon><x-icon name="max" w="12" h="12" style="margin-left:3.500px"></x-icon><x-icon name="close" w="12" h="12" style="margin-left:3px"></x-icon></div></div>
<div class="tabs"><div class="file">FILE</div><div class="vt">VIEW</div><div class="tb" style="margin-left:13px">OBJECTS</div><div class="tb">ADVANCED</div><div class="tb">MEASUREMENT</div><div class="tb">CHANGES</div><div class="tb">PLUGINS</div></div>
<div class="rib">
<rib-group label="Type" w="156"><div class="col" style="padding:2px 0 0 4px;width:100%">
<div class="item hl" style="width:55px;padding-left:4px"><x-icon name="cube3d" w="17" vw="17"></x-icon><span style="margin-left:-2px">3D</span><x-icon name="tri" w="9" h="9" style="margin-left:4px"></x-icon></div>
<div class="item" style="padding-left:3px;gap:2px"><x-icon name="proj" w="18" h="18" vw="20" vh="20"></x-icon><span>Projections in Space</span><x-icon name="tri" w="9" h="9" style="margin-left:4px"></x-icon></div>
<div class="item" style="padding-left:3px;gap:2px"><x-icon name="view2d" w="18" h="18" vw="20" vh="20"></x-icon><span>2D View</span></div>
</div></rib-group>
<rib-group label="Camera" w="50"><div class="col" style="padding:2px 0 0 9px">
<div class="item"><x-icon name="mag" w="17"></x-icon></div>
<div class="item"><x-icon name="feet" w="18"></x-icon></div>
<div class="item" style="gap:6px"><x-icon name="plane" w="18" style="margin-left:-1px"></x-icon><x-icon name="tri" w="9" h="9"></x-icon></div>
</div></rib-group>
<rib-group label="View" w="185"><div style="display:flex;width:100%"><div class="g3"><x-icon name="vfront" w="17"></x-icon><x-icon name="vtop" w="18"></x-icon><x-icon name="rotl" w="18" style="transform:translateY(8px)"></x-icon><x-icon name="vleft" w="18"></x-icon><x-icon name="vright" w="18"></x-icon><span></span><x-icon name="vfl" w="18"></x-icon><x-icon name="vbr" w="18"></x-icon><x-icon name="rotr" w="18" style="transform:translateY(-16px)"></x-icon></div>
<div class="vsep"></div>
<div class="big" style="width:56px;margin:6px 2px 0 3px"><x-icon name="gear" w="36" h="36"></x-icon><span style="letter-spacing:-.3px;line-height:14px;margin-top:2px">Options</span><x-icon name="tri" w="9" h="9" style="margin-top:1px"></x-icon></div>
<div class="col" style="padding-top:10px"><div class="item hl" style="width:38px;padding-left:3px;gap:3px"><x-icon name="cyl" w="20" h="20" vw="24" vh="24"></x-icon><x-icon name="tri" w="9" h="9"></x-icon></div>
<div class="item" style="padding-left:4px;gap:7px;margin-top:8px"><x-icon name="map" w="16"></x-icon><x-icon name="tri" w="9" h="9"></x-icon></div></div>
</div></rib-group>
<rib-group label="Storey Slide" w="219"><div style="display:flex;width:100%;padding-top:6px;box-sizing:border-box"><div class="col"><rib-slider n="X" at="64"></rib-slider><rib-slider n="Y" at="64"></rib-slider><rib-slider n="Z" at="0"></rib-slider></div>
<div class="big" style="margin-left:15px"><x-icon name="broom" w="32" h="32" vw="30" vh="30" style="margin-top:1px"></x-icon><span style="color:#999;letter-spacing:-.3px;margin-top:4px;line-height:16px">Reset</span></div></div></rib-group>
<rib-group label="See also" w="51"><div class="col" style="padding:8px 0 0 8px"><div class="item" style="gap:6px"><x-icon name="flag" w="20"></x-icon><x-icon name="trig" w="9" h="9"></x-icon></div><div class="item" style="margin-top:10px;padding-left:1px;opacity:.7"><x-icon name="bimlogo" w="18"></x-icon></div></div></rib-group>
<div class="chev"><x-icon name="chev" w="12" h="9"></x-icon></div>
</div>
<div class="cv"><bim-model></bim-model><div class="wm">BIM Vision</div></div>
<div class="st"><span>0.04 s</span><span>0,1 ★</span></div>`}}
customElements.define('bim-window',BimWindow);

class DeskTop extends HTMLElement{constructor(){super();const r=this.attachShadow({mode:'open'});r.innerHTML=`<style>:host{display:block;position:relative;width:1395px;height:756px;overflow:hidden;background:#fff}.a,.b{position:absolute;top:0}.a{left:0}.b{left:660px}</style><fzk-window class="a"></fzk-window><bim-window class="b"></bim-window>`}}
customElements.define('desk-top',DeskTop);
</script>
</body></html>
